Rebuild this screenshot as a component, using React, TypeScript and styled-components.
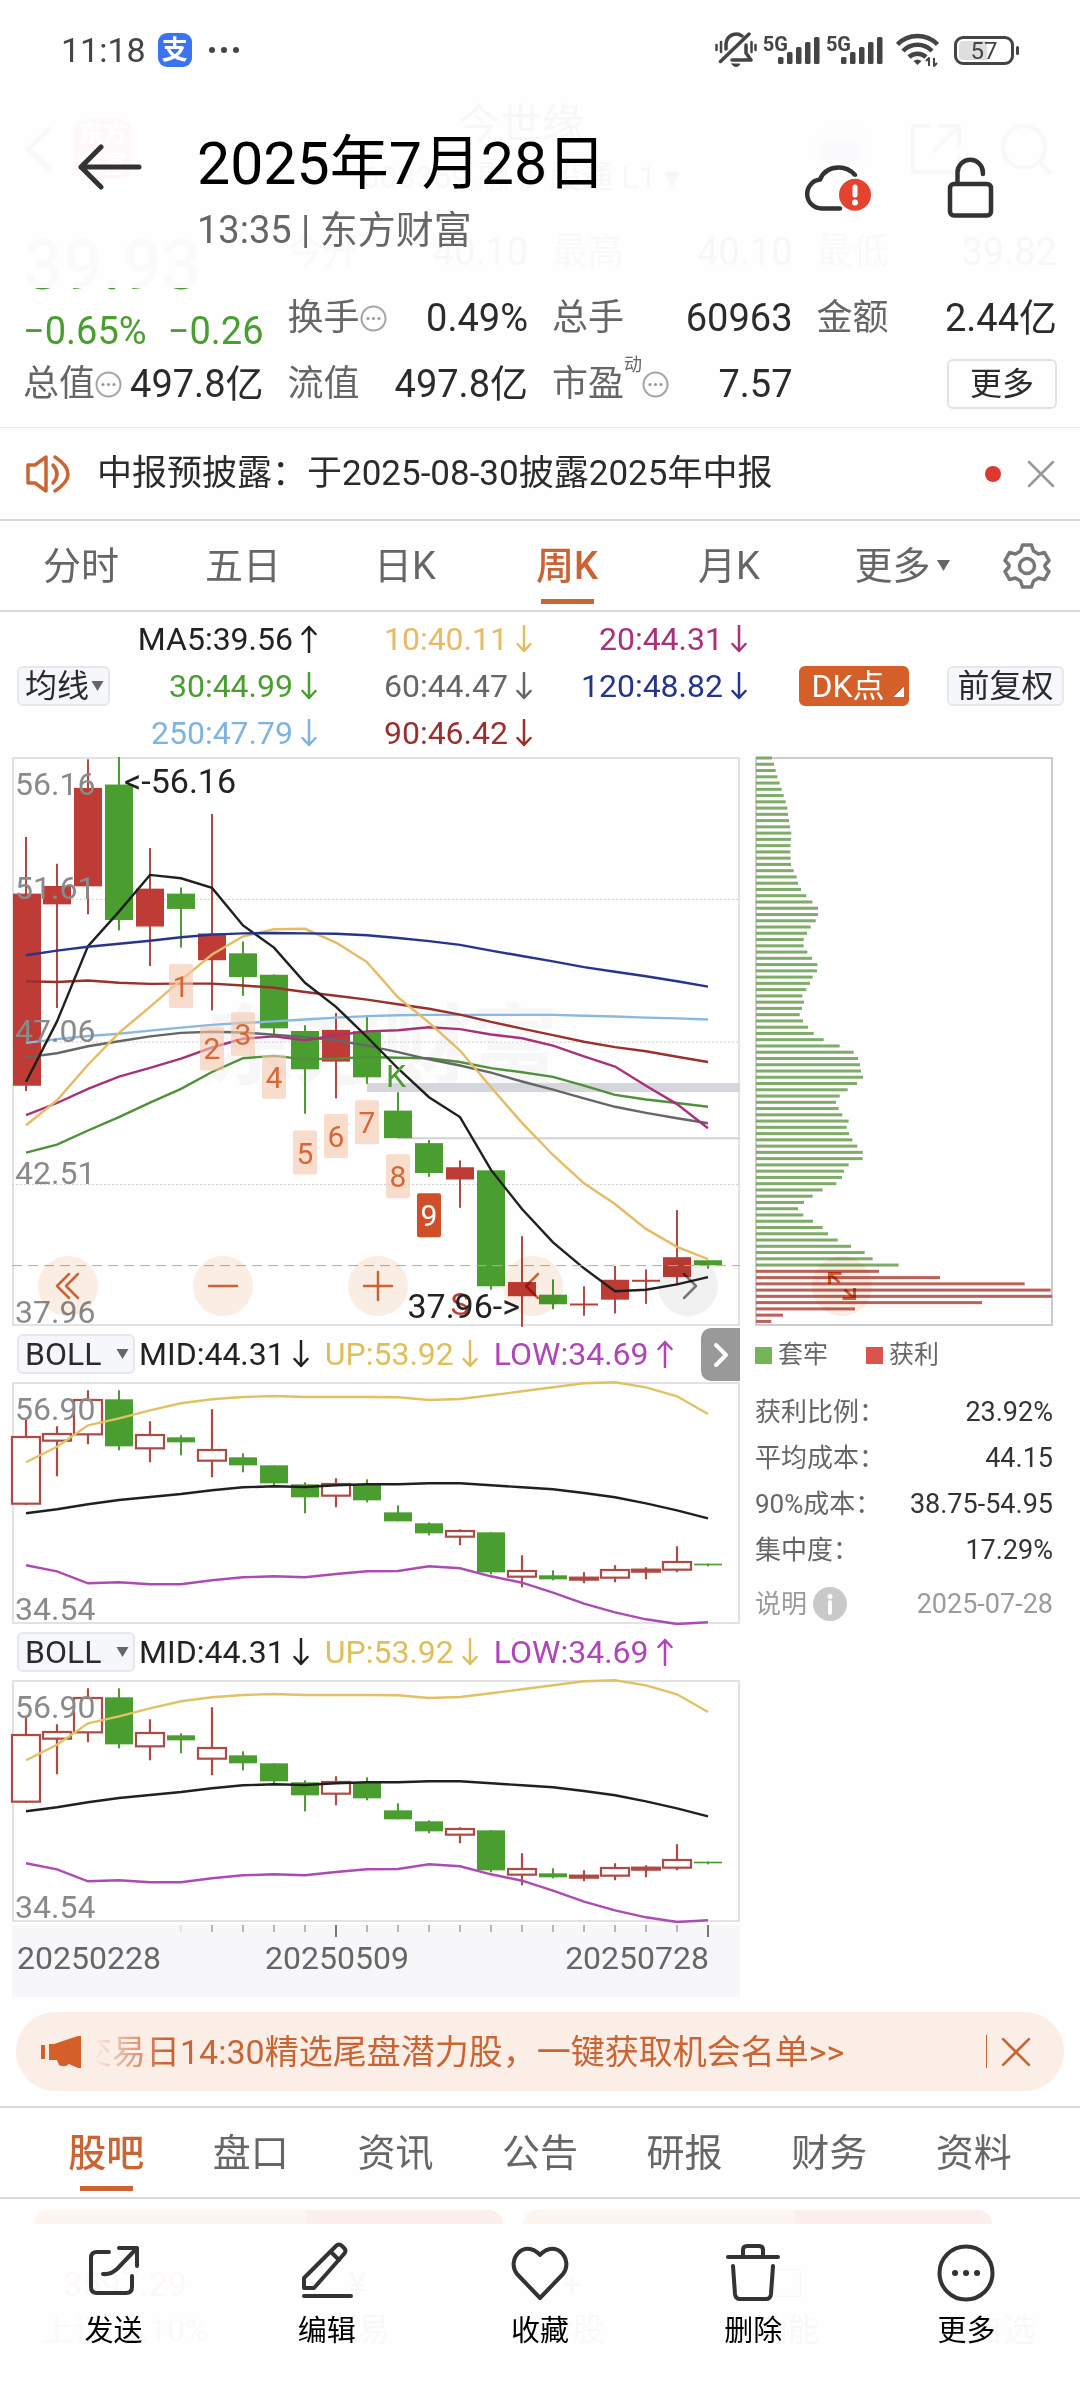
import React from 'react';
import styled, { createGlobalStyle } from 'styled-components';

const GlobalStyle = createGlobalStyle`
  * { box-sizing: border-box; }
  body {
    margin: 0;
    background: #fefefe;
    color: #2b2b2b;
    font-family: Roboto, "Noto Sans CJK SC", sans-serif;
  }
  button, select {
    margin: 0;
    padding: 0;
    border: 0;
    background: none;
    color: inherit;
    font-family: inherit;
  }
  svg { display: block; }
`;

const orange = '#cb6433';
const grey = '#666666';
const green = '#4a9e2f';
const red = '#be3c35';
const softRed = '#ad4a44';

/* ---------- page and translucent bars ---------- */

const Page = styled.div`
  position: relative;
  padding-bottom: 176px;
`;

const Header = styled.header`
  position: absolute;
  inset: 0 0 auto 0;
  height: 288px;
  background: rgba(254, 254, 254, 0.97);
  z-index: 2;
`;

const StatusBar = styled.div`
  display: flex;
  align-items: center;
  height: 100px;
  padding: 0 61px 0 61px;
  color: #444;
`;

const Clock = styled.span`
  font-size: 34px;
  line-height: 40px;
  margin-right: 12px;
`;

const AppBadge = styled.span`
  width: 34px;
  height: 34px;
  border-radius: 9px;
  background: #3a74f0;
  color: #fff;
  font-size: 26px;
  font-weight: 700;
  line-height: 34px;
  text-align: center;
  margin-right: 16px;
`;

const StatusIcons = styled.div`
  display: flex;
  align-items: center;
  margin-left: auto;
`;

const SignalGroup = styled.span`
  display: flex;
  align-items: center;
  margin-left: 6px;
`;

const SignalTag = styled.span`
  align-self: flex-start;
  font-size: 20px;
  font-weight: 700;
  line-height: 16px;
  margin-right: -10px;
`;

const WifiSlot = styled.span`
  margin: 0 15px 0 13px;
`;

const Battery = styled.span`
  display: flex;
  align-items: center;
`;

const BatteryBody = styled.span`
  width: 60px;
  height: 29px;
  border: 3px solid #444;
  border-radius: 9px;
  background: linear-gradient(90deg, #dedede 55%, #fefefe 55%);
  background-clip: content-box;
  padding: 2px;
  font-size: 24px;
  line-height: 20px;
  text-align: center;
`;

const BatteryNub = styled.span`
  width: 3px;
  height: 9px;
  margin-left: 2px;
  border-radius: 2px;
  background: #444;
`;

const ToolRow = styled.div`
  display: flex;
  align-items: flex-start;
  padding: 28px 70px 0;
`;

const ToolButton = styled.button<{ $h: number }>`
  display: flex;
  align-items: center;
  justify-content: center;
  width: 80px;
  height: ${(p) => p.$h}px;
  margin-left: 52px;
  &:first-child { margin-left: 0; }
`;

const TitleBlock = styled.div`
  flex: 1;
  padding-left: 47px;
`;

const Title = styled.h1`
  margin: 0;
  font-size: 59px;
  font-weight: 400;
  line-height: 72px;
  color: #000;
`;

const Subtitle = styled.p`
  margin: 0;
  font-size: 38px;
  line-height: 60px;
  color: #666;
`;

/* ---------- stock nav below the header ---------- */

const StockNav = styled.div`
  display: flex;
  align-items: center;
  height: 208px;
  padding: 90px 28px 0 24px;
  border-bottom: 1px solid #eee;
`;

const BrandBadge = styled.span`
  width: 58px;
  height: 60px;
  margin-left: 22px;
  border-radius: 12px;
  background: #e8643c;
  color: #fff;
  font-size: 24px;
  font-weight: 700;
  line-height: 30px;
  text-align: center;
`;

const StockName = styled.div`
  flex: 1;
  padding-left: 98px;
  text-align: center;
  font-size: 42px;
  line-height: 56px;
`;

const StockCode = styled.div`
  font-size: 32px;
  line-height: 48px;
`;

const NavIcons = styled.div`
  display: flex;
  align-items: center;
  gap: 38px;
`;

/* ---------- quote figures ---------- */

const QuoteGrid = styled.section`
  display: grid;
  grid-template-columns: repeat(4, 1fr);
  grid-auto-rows: 66px;
  column-gap: 24px;
  padding: 11px 23px 10px;
  border-bottom: 1px solid #ececec;
`;

const PriceCell = styled.div`
  grid-row: span 2;
  color: ${green};
`;

const Price = styled.div`
  font-size: 70px;
  font-weight: 500;
  line-height: 92px;
`;

const Change = styled.div`
  display: flex;
  justify-content: space-between;
  font-size: 38px;
  line-height: 40px;
`;

const Figure = styled.div`
  display: flex;
  align-items: center;
  font-size: 36px;
  line-height: 48px;
`;

const FigureLabel = styled.span`
  color: ${grey};
  white-space: nowrap;
`;

const FigureMark = styled.sup`
  align-self: flex-start;
  font-size: 18px;
  line-height: 28px;
  color: ${grey};
`;

const FigureValue = styled.span`
  margin-left: auto;
  font-size: 38px;
  white-space: nowrap;
`;

const MoreButton = styled.button`
  width: 110px;
  height: 50px;
  margin-left: auto;
  border: 2px solid #e2e2e2;
  border-radius: 6px;
  font-size: 32px;
  line-height: 44px;
`;

/* ---------- notice ---------- */

const Notice = styled.section`
  display: flex;
  align-items: center;
  height: 93px;
  padding: 0 25px;
  border-bottom: 2px solid #d8d8d8;
  font-size: 35px;
  line-height: 48px;
`;

const NoticeLink = styled.a`
  flex: 1;
  padding-left: 26px;
  color: inherit;
  text-decoration: none;
`;

const Dot = styled.span`
  width: 16px;
  height: 16px;
  margin-right: 26px;
  border-radius: 50%;
  background: #dc3a30;
`;

/* ---------- tabs ---------- */

const TabBar = styled.nav<{ $columns: string; $pad: number }>`
  display: grid;
  grid-template-columns: ${(p) => p.$columns};
  height: 91px;
  padding: 0 ${(p) => p.$pad}px;
  border-bottom: 2px solid #dadada;
`;

const Tab = styled.button<{ $active?: boolean }>`
  display: flex;
  align-items: center;
  justify-content: center;
  gap: 6px;
  font-size: 38px;
  line-height: 56px;
  color: ${(p) => (p.$active ? orange : grey)};
  font-weight: ${(p) => (p.$active ? 500 : 400)};
  background: linear-gradient(${(p) => (p.$active ? orange : 'transparent')}, ${(p) =>
    p.$active ? orange : 'transparent'}) center bottom 6px / 53px 5px no-repeat;
`;

const SettingsTab = styled(Tab)`
  padding-right: 20px;
`;

/* ---------- moving average legend ---------- */

const AverageBar = styled.section`
  display: flex;
  align-items: center;
  padding: 3px 16px 1px 17px;
`;

const SelectBox = styled.label<{ $w: number }>`
  position: relative;
  display: block;
  width: ${(p) => p.$w}px;
  flex: none;
`;

const Select = styled.select`
  appearance: none;
  width: 100%;
  height: 40px;
  padding: 0 0 0 6px;
  border: 2px solid #e6e7ea;
  border-radius: 6px;
  background: #f6f7fa;
  font-size: 32px;
  line-height: 36px;
`;

const Caret = styled.svg`
  position: absolute;
  right: 6px;
  top: 14px;
  pointer-events: none;
`;

const AverageGrid = styled.div`
  flex: 1;
  display: grid;
  grid-template-columns: 207fr 215fr 215fr;
  grid-auto-rows: 47px;
`;

const Reading = styled.span<{ $color: string }>`
  display: flex;
  align-items: center;
  justify-content: flex-end;
  gap: 8px;
  font-size: 32px;
  line-height: 40px;
  white-space: nowrap;
  color: ${(p) => p.$color};
`;

const Chip = styled.button<{ $solid?: boolean }>`
  height: 40px;
  margin-left: ${(p) => (p.$solid ? 52 : 38)}px;
  width: ${(p) => (p.$solid ? 110 : 117)}px;
  border: 2px solid ${(p) => (p.$solid ? '#d55f29' : '#e6e7ea')};
  border-radius: 6px;
  background: ${(p) =>
    p.$solid
      ? 'linear-gradient(135deg, transparent 50%, #fff 50%) right 3px bottom 7px / 10px 10px no-repeat #d55f29'
      : '#f6f7fa'};
  color: ${(p) => (p.$solid ? '#fff' : '#2b2b2b')};
  padding-right: ${(p) => (p.$solid ? 12 : 0)}px;
  font-size: 32px;
  line-height: 34px;
  white-space: nowrap;
`;

/* ---------- charts ---------- */

const ChartArea = styled.section`
  display: grid;
  grid-template-columns: 728fr 298fr;
  column-gap: 15px;
  padding: 0 27px 0 12px;
`;

const ChartFrame = styled.div`
  position: relative;
`;

const Plot = styled.svg`
  width: 100%;
  height: auto;
  overflow: visible;
`;

const PlotText = styled.text`
  font-size: 32px;
`;

const NoteText = styled.text`
  font-size: 34px;
  fill: #222;
`;

const Watermark = styled.text`
  font-size: 88px;
  font-weight: 700;
  fill: #f7f7f7;
`;

const CountText = styled.text`
  font-size: 30px;
`;

const PlotControls = styled.div`
  position: absolute;
  inset: auto 22px 10px 26px;
  display: flex;
  justify-content: space-between;
  mix-blend-mode: multiply;
`;

const RoundButton = styled.button<{ $muted?: boolean }>`
  display: flex;
  align-items: center;
  justify-content: center;
  width: 60px;
  height: 60px;
  border-radius: 50%;
  background: ${(p) => (p.$muted ? '#f2f2f2' : '#fbeee5')};
  color: ${(p) => (p.$muted ? '#777' : orange)};
`;

const ExpandButton = styled(RoundButton)`
  position: absolute;
  left: 19%;
  bottom: 10px;
  mix-blend-mode: multiply;
`;

const BollBar = styled.div`
  display: flex;
  align-items: center;
  gap: 16px;
  height: 56px;
  padding-left: 5px;
  ${SelectBox} { margin-right: -12px; }
`;

const NextButton = styled.button`
  display: flex;
  align-items: center;
  justify-content: center;
  align-self: flex-end;
  width: 39px;
  height: 53px;
  margin: 0 0 1px auto;
  border-radius: 10px 0 0 10px;
  background: #999;
  color: #fff;
`;

const ChipLegend = styled.div`
  display: flex;
  align-items: center;
  height: 58px;
  margin-bottom: 5px;
  gap: 38px;
`;

const LegendItem = styled.span<{ $color: string }>`
  display: flex;
  align-items: center;
  gap: 6px;
  font-size: 25px;
  line-height: 36px;
  color: ${grey};
  &::before {
    content: "";
    width: 17px;
    height: 17px;
    background: ${(p) => p.$color};
  }
`;

const StatList = styled.dl`
  margin: 0;
`;

const StatRow = styled.div<{ $muted?: boolean }>`
  display: flex;
  align-items: center;
  justify-content: space-between;
  height: ${(p) => (p.$muted ? 62 : 46)}px;
  font-size: 26px;
  line-height: 36px;
  color: ${(p) => (p.$muted ? '#9b9b9b' : '#333')};
  white-space: nowrap;
  dt {
    display: flex;
    align-items: center;
    gap: 6px;
    color: ${(p) => (p.$muted ? '#9b9b9b' : grey)};
  }
  dd {
    margin: 0;
    font-size: 27px;
  }
`;

/* ---------- promo ---------- */

const Promo = styled.section`
  display: flex;
  align-items: center;
  height: 79px;
  margin: 15px 16px;
  padding: 0 33px 0 25px;
  border-radius: 40px;
  background: #faeee6;
  color: ${orange};
`;

const PromoText = styled.a`
  flex: 1;
  overflow: hidden;
  margin-left: 12px;
  font-size: 34px;
  line-height: 48px;
  color: inherit;
  text-decoration: none;
  white-space: nowrap;
  text-indent: -16px;
  mask-image: linear-gradient(90deg, transparent, #000 70px);
`;

const PromoClose = styled.button`
  padding-left: 14px;
  border-left: 1px solid ${orange};
  height: 33px;
`;

const Divided = styled.div`
  border-top: 2px solid #dadada;
`;

/* ---------- feed cards and bottom bars ---------- */

const Cards = styled.div`
  display: grid;
  grid-template-columns: 469fr 469fr;
  gap: 20px;
  padding: 11px 88px 0 34px;
`;

const Card = styled.div`
  height: 14px;
  border-radius: 20px 20px 0 0;
  background: linear-gradient(90deg, #fdf5f0 58%, #fbefed 58%);
`;

const MarketStrip = styled.div`
  position: absolute;
  inset: auto 0 0 0;
  display: grid;
  grid-template-columns: 250fr 215fr 215fr 215fr 185fr;
  height: 176px;
  padding-top: 36px;
  font-size: 32px;
  line-height: 44px;
  text-align: center;
`;

const MarketCell = styled.div<{ $color?: string }>`
  color: ${(p) => p.$color ?? '#555'};
`;

const MarketValue = styled.div`
  font-size: 34px;
  line-height: 48px;
`;

const ActionBar = styled.footer`
  position: absolute;
  inset: auto 0 0 0;
  display: grid;
  grid-template-columns: repeat(5, 1fr);
  height: 176px;
  padding: 0 7px;
  background: rgba(254, 254, 254, 0.97);
`;

const Action = styled.button`
  display: flex;
  flex-direction: column;
  align-items: center;
  padding-top: 18px;
  gap: 7px;
  font-size: 29px;
  line-height: 44px;
  color: #000;
`;

/* ---------- icons ---------- */

const stroke = (width: number, color = 'currentColor') => ({
  fill: 'none',
  stroke: color,
  strokeWidth: width,
  strokeLinecap: 'round' as const,
  strokeLinejoin: 'round' as const,
});

const MuteBell = () => (
  <svg width="42" height="36" viewBox="0 0 42 36" {...stroke(3.5, '#444')}>
    <path d="M5.500 29.500L34 2" />
    <path d="M11 17V12C12 2 22 0 27 4M31 13v8l5 7H17" />
    <path d="M1.500 13v5M6 10v10M40.500 13v5M36.500 10v10" strokeWidth="2.500" />
    <path d="M17 32h8q-1 2.500-4 2.500T17 32z" fill="#444" strokeWidth="1" />
  </svg>
);

const Signal = () => (
  <SignalGroup>
    <SignalTag>5G</SignalTag>
    <svg width="42" height="28" viewBox="0 0 42 28" fill="#444">
      <rect x="0" y="21" width="5.500" height="7" rx="1.500" />
      <rect x="9" y="16" width="5.500" height="12" rx="1.500" />
      <rect x="18" y="11" width="5.500" height="17" rx="1.500" />
      <rect x="27" y="6" width="5.500" height="22" rx="1.500" />
      <rect x="36" y="1" width="5.500" height="27" rx="1.500" />
    </svg>
  </SignalGroup>
);

const Wifi = () => (
  <svg width="43" height="34" viewBox="0 0 43 34" {...stroke(4.5, '#444')} strokeLinecap="butt">
    <path d="M1.500 11.500a28 28 0 0 1 40 0" />
    <path d="M7 18a20 20 0 0 1 29 0" />
    <path d="M13 24a12.500 12.500 0 0 1 17 0" />
    <path d="M17.500 28q4-3 8 0l-4 4z" fill="#444" stroke="none" />
    <path d="M33 33v-8l-3 3M38 25v8l3-3" strokeWidth="2" />
  </svg>
);

const BackArrow = () => (
  <svg width="64" height="46" viewBox="0 0 64 46" {...stroke(5, '#333')}>
    <path d="M61 23H3M23 3L3 23l20 20" />
  </svg>
);

const CloudAlert = () => (
  <svg width="80" height="70" viewBox="0 0 80 70">
    <path d="M42 54.500H23.500A14.500 14.500 0 0 1 22 25.600C25 18 32 13.500 41 13.500C48 13.500 53 16.500 57 21" {...stroke(4.5, '#333')} />
    <circle cx="57" cy="40.700" r="18" fill="#fefefe" />
    <circle cx="57" cy="40.700" r="16" fill="#e4432f" />
    <path d="M57 33v8" {...stroke(5, '#fff')} />
    <circle cx="57" cy="48.500" r="3" fill="#fff" />
  </svg>
);

const OpenLock = () => (
  <svg width="80" height="70" viewBox="0 0 80 70" {...stroke(4.5, '#333')}>
    <rect x="20" y="30" width="41" height="31.500" rx="4" />
    <path d="M27.500 29V18.500a12.700 12.700 0 0 1 25.400 0V20" />
  </svg>
);

const InfoDots = () => (
  <svg width="27" height="27" viewBox="0 0 27 27" fill="#999">
    <circle cx="13.500" cy="13.500" r="12" fill="none" stroke="#a5a5a5" strokeWidth="2" />
    <circle cx="8" cy="13.500" r="1.600" />
    <circle cx="13.500" cy="13.500" r="1.600" />
    <circle cx="19" cy="13.500" r="1.600" />
  </svg>
);

const Speaker = () => (
  <svg width="46" height="40" viewBox="0 0 46 40" {...stroke(3.5, orange)}>
    <path d="M3 11h7L21 3v34l-11-8H3z" />
    <path d="M28 11q8 9 0 18M30 3q26 17 0 34" />
  </svg>
);

const Cross = ({ size, color, width }: { size: number; color: string; width: number }) => (
  <svg width={size} height={size} viewBox="0 0 28 28" {...stroke(width, color)}>
    <path d="M2 2l24 24M26 2L2 26" />
  </svg>
);

const Gear = () => (
  <svg width="48" height="48" viewBox="0 0 48 48" {...stroke(3.5, '#777')}>
    <path d="M19.500 3h9l2 6 5 3 6-1.500 4.500 8-4 4.500v2l4 4.500-4.500 8-6-1.500-5 3-2 6h-9l-2-6-5-3-6 1.500-4.500-8L6 25v-2l-4-4.500 4.500-8 6 1.500 5-3z" />
    <circle cx="24" cy="24" r="7.500" />
  </svg>
);

const Trend = ({ up }: { up?: boolean }) => (
  <svg width="16" height="28" viewBox="0 0 16 28" {...stroke(2.5)}>
    <path d={up ? 'M8 27V2M1.500 9L8 2l6.500 7' : 'M8 1v25M1.500 19L8 26l6.500-7'} />
  </svg>
);

const DownMark = ({ size }: { size: number }) => (
  <svg width={size} height={size} viewBox="0 0 12 12" fill="#666">
    <path d="M0 1h12L6 11z" />
  </svg>
);

const Glyph = ({ d }: { d: string }) => (
  <svg width="34" height="34" viewBox="0 0 34 34" {...stroke(2.5)}>
    <path d={d} />
  </svg>
);

const InfoBadge = () => (
  <svg width="34" height="34" viewBox="0 0 34 34">
    <circle cx="17" cy="17" r="17" fill="#c9c9c9" />
    <circle cx="17" cy="9.500" r="2.500" fill="#fff" />
    <path d="M17 15v11" {...stroke(4, '#fff')} />
  </svg>
);

const Megaphone = () => (
  <svg width="41" height="36" viewBox="0 0 41 36" fill="#d55f29">
    <rect x="0" y="11" width="4" height="14" />
    <path d="M8 10h5L37 2h3v32h-3l-9-4q-4 4-10 1l-2-5H8z" />
  </svg>
);

const actionIcons: Record<string, React.ReactNode> = {
  发送: (
    <>
      <path d="M25 10H13q-6 0-6 6v29q0 6 6 6h29q6 0 6-6V34" />
      <path d="M35 6h18v18M53 6L34 26q-7 7-15 6" />
    </>
  ),
  编辑: (
    <>
      <path d="M7 46V36L39 4q3-3 6 0l2 2q3 3 0 6L17 46zM34 10l8 8" />
      <path d="M7 54h47" />
    </>
  ),
  收藏: <path d="M30 56L7 32C-4 18 14-4 30 13C46-4 64 18 53 32z" />,
  删除: (
    <>
      <path d="M5 15h50M20 14V8q0-4 4-4h12q4 0 4 4v6" />
      <path d="M10 24l2 28q.500 5 5 5h26q4.500 0 5-5l2-28" />
    </>
  ),
  更多: (
    <>
      <circle cx="30" cy="31" r="26.500" />
      <path d="M19 31h.1M30 31h.1M41 31h.1" strokeWidth="6" />
    </>
  ),
};

/* ---------- chart data ---------- */

type Candle = [up: boolean, top: number, bottom: number, high: number, low: number];

const weekly: Candle[] = [
  [true, 401, 903, 253, 917], [true, 381, 429, 323, 700], [true, 125, 382, 50, 455],
  [false, 116, 470, 44, 497], [true, 388, 487, 282, 590], [false, 401, 441, 385, 542],
  [true, 505, 575, 193, 706], [false, 557, 619, 526, 668], [false, 613, 753, 612, 768],
  [false, 760, 860, 745, 976], [true, 757, 840, 713, 936], [false, 760, 881, 722, 898],
  [false, 968, 1040, 920, 1040], [false, 1053, 1131, 1045, 1141], [true, 1116, 1148, 1098, 1222],
  [false, 1124, 1427, 1124, 1436], [true, 1416, 1453, 1296, 1533], [false, 1449, 1474, 1409, 1487],
  [true, 1472, 1477, 1427, 1504], [true, 1410, 1462, 1374, 1498], [true, 1410, 1415, 1383, 1473],
  [true, 1351, 1403, 1228, 1424], [false, 1359, 1372, 1359, 1381],
];

const averages: { color: string; points: number[] }[] = [
  { color: '#4f9139', points: [1078, 1057, 1020, 985, 947, 911, 867, 831, 825, 834, 832, 828, 830, 831, 841, 857, 868, 880, 903, 927, 939, 948, 958] },
  { color: '#666666', points: [829, 818, 800, 787, 774, 765, 762, 764, 770, 776, 784, 798, 815, 834, 850, 869, 892, 913, 936, 958, 974, 988, 1001] },
  { color: '#a83279', points: [980, 948, 911, 879, 856, 832, 803, 780, 774, 784, 771, 761, 758, 750, 755, 769, 779, 798, 826, 853, 903, 951, 1014] },
  { color: '#88b9e0', points: [791, 781, 773, 767, 759, 751, 744, 739, 735, 730, 725, 721, 719, 718, 718, 718, 718, 718, 720, 722, 725, 727, 730] },
  { color: '#99302e', points: [630, 632, 628, 634, 637, 636, 636, 641, 647, 658, 668, 678, 690, 702, 717, 736, 754, 771, 788, 802, 813, 827, 841] },
  { color: '#e6bb63', points: [1006, 941, 848, 765, 697, 627, 560, 513, 494, 493, 529, 580, 672, 738, 811, 907, 1000, 1084, 1158, 1212, 1277, 1324, 1356] },
  { color: '#202020', points: [893, 735, 538, 448, 352, 361, 386, 484, 542, 634, 697, 775, 858, 933, 985, 1123, 1225, 1312, 1380, 1440, 1436, 1422, 1403] },
  { color: '#26358c', points: [562, 550, 540, 532, 524, 515, 508, 505, 504, 505, 506, 510, 517, 525, 535, 550, 564, 578, 593, 605, 617, 630, 644] },
];

const counts = [
  [5, 585], [6, 748], [7, 711], [8, 822], [9, 1020], [10, 977], [11, 941], [12, 1082], [13, 1184],
];

const boll: Candle[] = [
  [true, 320, 520, 265, 524], [true, 311, 331, 288, 438], [true, 209, 312, 180, 342],
  [false, 207, 348, 180, 360], [true, 314, 354, 273, 396], [false, 321, 336, 315, 375],
  [true, 359, 391, 237, 441], [false, 381, 405, 369, 426], [false, 405, 459, 405, 468],
  [false, 462, 501, 456, 549], [true, 461, 496, 444, 531], [false, 462, 510, 447, 516],
  [false, 546, 573, 525, 573], [false, 579, 609, 576, 615], [true, 602, 619, 597, 645],
  [false, 606, 726, 606, 732], [true, 722, 739, 675, 771], [false, 735, 747, 720, 750],
  [true, 742, 748, 726, 759], [true, 719, 742, 705, 756], [true, 718, 724, 711, 747],
  [true, 695, 718, 648, 726], [false, 700, 705, 700, 708],
];

const bands: { color: string; points: number[] }[] = [
  { color: '#e0c264', points: [396, 349, 285, 264, 240, 219, 207, 200, 197, 200, 200, 200, 201, 209, 206, 195, 183, 171, 159, 156, 171, 198, 251] },
  { color: '#202020', points: [549, 537, 522, 509, 500, 491, 480, 471, 468, 470, 465, 462, 462, 459, 459, 465, 471, 477, 488, 501, 519, 540, 564] },
  { color: '#ab4bb4', points: [705, 723, 759, 756, 762, 762, 750, 741, 738, 741, 731, 723, 722, 708, 714, 738, 757, 787, 820, 846, 867, 881, 876] },
];

const holdings = [
  96, 102, 107, 112, 119, 125, 131, 137, 142, 144, 147, 150, 154, 153, 151, 151, 152, 153, 161, 170,
  174, 183, 199, 217, 234, 234, 227, 212, 201, 191, 191, 202, 216, 232, 231, 218, 210, 199, 187, 192,
  186, 179, 189, 204, 221, 251, 299, 341, 354, 360, 363, 369, 351, 323, 299, 288, 296, 307, 326, 320,
  327, 337, 352, 368, 368, 326, 312, 306, 289, 248, 218, 192, 174, 190, 219, 248, 264, 293, 333, 374,
  398, 476, 417, 600, 854, 932, 936, 726, 345, 129, 94,
];
const firstProfit = 82;

const cx = (i: number) => 14 + 31 * i;
const wy = (v: number) => (v - 44) / 2.613;
const by = (v: number) => (v - 155) / 3;
const line = (points: number[], y: (v: number) => number) =>
  points.map((v, i) => `${cx(i)},${y(v).toFixed(1)}`).join(' ');

const WeeklyChart = () => (
  <ChartFrame>
    <Plot viewBox="0 0 728 569" role="img" aria-label="周K">
      <Watermark x="194" y="320">东方财富</Watermark>
      <rect x="1" y="1" width="726" height="567" fill="none" stroke="#e2e2e2" strokeWidth="2" />
      {[416, 789, 1161].map((v) => (
        <line key={v} x1="0" x2="728" y1={wy(v)} y2={wy(v)} stroke="#cfcfcf" strokeDasharray="2 2" />
      ))}
      <rect x={cx(11)} y={wy(896)} width={728 - cx(11)} height="9" fill="#d5d6dc" />
      <line x1={cx(12)} x2="728" y1={wy(1040)} y2={wy(1040)} stroke="#d2d2d2" strokeWidth="2" />
      {weekly.map(([up, top, bottom, high, low], i) => (
        <g key={i} fill={up ? red : green}>
          <rect x={cx(i) - 1} y={wy(high)} width="2" height={wy(low) - wy(high)} fill={up ? softRed : green} />
          <rect x={cx(i) - 14 + (i ? 0 : 1)} y={wy(top)} width="28" height={Math.max(2, wy(bottom) - wy(top))} />
        </g>
      ))}
      {averages.map((a) => (
        <polyline key={a.color} points={line(a.points, wy)} fill="none" stroke={a.color} strokeWidth="2.4" />
      ))}
      <line x1="0" x2="728" y1={wy(1373)} y2={wy(1373)} stroke="#c9a883" strokeWidth="1" strokeDasharray="10 6" />
      {counts.map(([i, top], n) => (
        <g key={n} fill={n === 8 ? '#fff' : '#d4683a'}>
          <rect x={cx(i) - 12} y={wy(top)} width="24" height="44" rx="2" fill={n === 8 ? '#cf4f2b' : '#f3c6ac'} fillOpacity={n === 8 ? 1 : 0.62} />
          <CountText x={cx(i)} y={wy(top) + 33} textAnchor="middle">{n + 1}</CountText>
        </g>
      ))}
      <g fill="#8a8a8a">
        <PlotText x="3" y={wy(143)}>56.16</PlotText>
        <PlotText x="3" y={wy(416)}>51.61</PlotText>
        <PlotText x="3" y={wy(788)}>47.06</PlotText>
        <PlotText x="3" y={wy(1161)}>42.51</PlotText>
        <PlotText x="3" y={wy(1523)}>37.96</PlotText>
      </g>
      <PlotText x={cx(12) - 2} y={wy(905)} textAnchor="middle" fill={green}>K</PlotText>
      <PlotText x={cx(14)} y={wy(1503)} textAnchor="middle" fill={red}>S</PlotText>
      <NoteText x="112" y={wy(137)}>&lt;-56.16</NoteText>
      <NoteText x="508" y={wy(1509)} textAnchor="end">37.96-&gt;</NoteText>
    </Plot>
    <PlotControls>
      <RoundButton aria-label="最早"><Glyph d="M18 5L6 17l12 12M27 5L15 17l12 12" /></RoundButton>
      <RoundButton aria-label="缩小"><Glyph d="M3 17h28" /></RoundButton>
      <RoundButton aria-label="放大"><Glyph d="M3 17h28M17 3v28" /></RoundButton>
      <RoundButton aria-label="向前"><Glyph d="M22 5L10 17l12 12" /></RoundButton>
      <RoundButton aria-label="向后" $muted><Glyph d="M13 5l12 12-12 12" /></RoundButton>
    </PlotControls>
  </ChartFrame>
);

const HoldingChart = () => (
  <ChartFrame>
    <Plot viewBox="0 0 298 569" role="img" aria-label="筹码分布">
      <rect x="1" y="1" width="296" height="567" fill="none" stroke="#cccccc" strokeWidth="2" />
      {holdings.map((end, i) => (
        <rect key={i} x="1" y={i * 6.26 - 0.5} width={(end - 48) / 3} height="3" fill={i < firstProfit ? '#7fac69' : '#bd6059'} />
      ))}
    </Plot>
    <ExpandButton aria-label="展开">
      <svg width="30" height="30" viewBox="0 0 30 30" {...stroke(3, '#d5622f')} strokeLinecap="butt" strokeLinejoin="miter">
        <path d="M2.500 13V2.500h12M2.500 2.500l10 9M27.500 17v10.500h-12M27.500 27.500l-10-9" />
      </svg>
    </ExpandButton>
  </ChartFrame>
);

const BollPanel = ({ id, next }: { id: string; next?: boolean }) => (
  <>
    <BollBar>
      <SelectBox $w={118} htmlFor={id}>
        <Select id={id} aria-label="指标"><option>BOLL</option></Select>
        <Caret width="13" height="12" viewBox="0 0 12 12" fill="#666"><path d="M0 1h12L6 11z" /></Caret>
      </SelectBox>
      <Reading $color="#222">MID:44.31<Trend /></Reading>
      <Reading $color="#dfbe5c">UP:53.92<Trend /></Reading>
      <Reading $color="#b044bb">LOW:34.69<Trend up /></Reading>
      {next && (
        <NextButton aria-label="下一个指标">
          <svg width="16" height="26" viewBox="0 0 16 26" {...stroke(4)}><path d="M3 3l10 10L3 23" /></svg>
        </NextButton>
      )}
    </BollBar>
    <Plot viewBox="0 0 728 242" role="img" aria-label="BOLL">
      <rect x="1" y="1" width="726" height="240" fill="none" stroke="#e2e2e2" strokeWidth="2" />
      {boll.map(([up, top, bottom, high, low], i) =>
        up ? (
          <g key={i} stroke={softRed} strokeWidth="2.2">
            <path d={`M${cx(i)} ${by(high)}V${by(top)}M${cx(i)} ${by(bottom)}V${by(low)}`} />
            <rect x={cx(i) - 14} y={by(top)} width="28" height={by(bottom) - by(top)} fill="#fff" />
          </g>
        ) : (
          <g key={i} fill={green}>
            <rect x={cx(i) - 1} y={by(high)} width="2" height={by(low) - by(high)} />
            <rect x={cx(i) - 14} y={by(top)} width="28" height={by(bottom) - by(top)} />
          </g>
        ),
      )}
      {bands.map((b) => (
        <polyline key={b.color} points={line(b.points, by)} fill="none" stroke={b.color} strokeWidth="2.4" />
      ))}
      <PlotText x="3" y={by(268)} fill="#8a8a8a">56.90</PlotText>
      <PlotText x="3" y={by(868)} fill="#8a8a8a">34.54</PlotText>
    </Plot>
  </>
);

const DateAxis = () => (
  <Plot viewBox="0 0 728 75" role="img" aria-label="日期">
    <rect x="0" y="3" width="728" height="72" fill="#f7f7fa" />
    {weekly.map((_, i) => {
      if (i < 5) return null;
      const major = i === 10 || i === 22;
      return <line key={i} x1={cx(i)} x2={cx(i)} y1="3" y2={major ? 15 : 10} stroke={i === 5 ? '#d0d0d0' : '#777'} strokeWidth={major ? 2 : 1} />;
    })}
    <g fill="#666">
      <PlotText x="5" y="47">20250228</PlotText>
      <PlotText x="325" y="47" textAnchor="middle">20250509</PlotText>
      <PlotText x="697" y="47" textAnchor="end">20250728</PlotText>
    </g>
  </Plot>
);

const QuoteFigure = ({ label, value, info, mark }: { label: string; value: string; info?: boolean; mark?: string }) => (
  <Figure>
    <FigureLabel>{label}</FigureLabel>
    {mark && <FigureMark>{mark}</FigureMark>}
    {info && <InfoDots />}
    <FigureValue>{value}</FigureValue>
  </Figure>
);

export default function App() {
  return (
    <Page>
      <GlobalStyle />

      <Header>
        <StatusBar>
          <Clock>11:18</Clock>
          <AppBadge>支</AppBadge>
          <svg width="32" height="8" viewBox="0 0 32 8" fill="#444">
            <circle cx="4" cy="4" r="3" /><circle cx="16" cy="4" r="3" /><circle cx="28" cy="4" r="3" />
          </svg>
          <StatusIcons>
            <MuteBell />
            <Signal />
            <Signal />
            <WifiSlot><Wifi /></WifiSlot>
            <Battery><BatteryBody>57</BatteryBody><BatteryNub /></Battery>
          </StatusIcons>
        </StatusBar>
        <ToolRow>
          <ToolButton $h={78} aria-label="返回"><BackArrow /></ToolButton>
          <TitleBlock>
            <Title>2025年7月28日</Title>
            <Subtitle>13:35 | 东方财富</Subtitle>
          </TitleBlock>
          <ToolButton $h={122} aria-label="云同步"><CloudAlert /></ToolButton>
          <ToolButton $h={122} aria-label="解锁"><OpenLock /></ToolButton>
        </ToolRow>
      </Header>

      <StockNav>
        <svg width="28" height="46" viewBox="0 0 28 46" {...stroke(5, '#555')}><path d="M25 3L4 23l21 20" /></svg>
        <BrandBadge>东方<br />财富</BrandBadge>
        <StockName>
          今世缘
          <StockCode>603369 融 沪股通 L1 ▾</StockCode>
        </StockName>
        <NavIcons>
          <svg width="60" height="60" viewBox="0 0 60 60">
            <circle cx="30" cy="30" r="29" fill="#f5e0cc" /><rect x="9" y="22" width="42" height="22" rx="10" fill="#9aa3d6" />
          </svg>
          <svg width="52" height="52" viewBox="0 0 52 52" {...stroke(4, '#555')}><path d="M18 3H3v46h46V34M30 3h19v19M49 3L24 28" /></svg>
          <svg width="52" height="52" viewBox="0 0 52 52" {...stroke(4, '#555')}><circle cx="24" cy="24" r="21" /><path d="M39 39l11 11" /></svg>
        </NavIcons>
      </StockNav>

      <QuoteGrid>
        <PriceCell>
          <Price>39.93</Price>
          <Change><span>−0.65%</span><span>−0.26</span></Change>
        </PriceCell>
        <QuoteFigure label="今开" value="40.10" />
        <QuoteFigure label="最高" value="40.10" />
        <QuoteFigure label="最低" value="39.82" />
        <QuoteFigure label="换手" value="0.49%" info />
        <QuoteFigure label="总手" value="60963" />
        <QuoteFigure label="金额" value="2.44亿" />
        <QuoteFigure label="总值" value="497.8亿" info />
        <QuoteFigure label="流值" value="497.8亿" />
        <QuoteFigure label="市盈" value="7.57" mark="动" info />
        <Figure><MoreButton>更多</MoreButton></Figure>
      </QuoteGrid>

      <Notice>
        <Speaker />
        <NoticeLink href="#notice">中报预披露：于2025-08-30披露2025年中报</NoticeLink>
        <Dot />
        <button aria-label="关闭公告"><Cross size={28} color="#999" width={2.5} /></button>
      </Notice>

      <TabBar $columns="repeat(5, 81fr) 92fr 43fr" $pad={0}>
        <Tab>分时</Tab>
        <Tab>五日</Tab>
        <Tab>日K</Tab>
        <Tab $active>周K</Tab>
        <Tab>月K</Tab>
        <Tab>更多<DownMark size={13} /></Tab>
        <SettingsTab aria-label="设置"><Gear /></SettingsTab>
      </TabBar>

      <AverageBar>
        <SelectBox $w={93} htmlFor="average">
          <Select id="average" aria-label="均线"><option>均线</option></Select>
          <Caret width="13" height="12" viewBox="0 0 12 12" fill="#666"><path d="M0 1h12L6 11z" /></Caret>
        </SelectBox>
        <AverageGrid>
          <Reading $color="#222">MA5:39.56<Trend up /></Reading>
          <Reading $color="#e6bb63">10:40.11<Trend /></Reading>
          <Reading $color="#a83279">20:44.31<Trend /></Reading>
          <Reading $color={green}>30:44.99<Trend /></Reading>
          <Reading $color="#666">60:44.47<Trend /></Reading>
          <Reading $color="#26358c">120:48.82<Trend /></Reading>
          <Reading $color="#7fb4de">250:47.79<Trend /></Reading>
          <Reading $color="#99302e">90:46.42<Trend /></Reading>
        </AverageGrid>
        <Chip $solid>DK点</Chip>
        <Chip>前复权</Chip>
      </AverageBar>

      <ChartArea>
        <div>
          <WeeklyChart />
          <BollPanel id="boll-first" next />
          <BollPanel id="boll-second" />
          <DateAxis />
        </div>
        <div>
          <HoldingChart />
          <ChipLegend>
            <LegendItem $color="#74b657">套牢</LegendItem>
            <LegendItem $color="#d9534f">获利</LegendItem>
          </ChipLegend>
          <StatList>
            <StatRow><dt>获利比例：</dt><dd>23.92%</dd></StatRow>
            <StatRow><dt>平均成本：</dt><dd>44.15</dd></StatRow>
            <StatRow><dt>90%成本：</dt><dd>38.75-54.95</dd></StatRow>
            <StatRow><dt>集中度：</dt><dd>17.29%</dd></StatRow>
            <StatRow $muted><dt>说明<InfoBadge /></dt><dd>2025-07-28</dd></StatRow>
          </StatList>
        </div>
      </ChartArea>

      <Promo>
        <Megaphone />
        <PromoText href="#picks">交易日14:30精选尾盘潜力股，一键获取机会名单&gt;&gt;</PromoText>
        <PromoClose aria-label="关闭推广"><Cross size={30} color={orange} width={2.5} /></PromoClose>
      </Promo>

      <Divided>
        <TabBar $columns="repeat(7, 1fr)" $pad={34}>
          <Tab $active>股吧</Tab>
          <Tab>盘口</Tab>
          <Tab>资讯</Tab>
          <Tab>公告</Tab>
          <Tab>研报</Tab>
          <Tab>财务</Tab>
          <Tab>资料</Tab>
        </TabBar>
      </Divided>

      <Cards><Card /><Card /></Cards>

      <MarketStrip>
        <MarketCell $color="#d9403a"><MarketValue>3597.29</MarketValue>上证 -0.10%</MarketCell>
        <MarketCell><MarketValue>¥</MarketValue>交易</MarketCell>
        <MarketCell><MarketValue>+</MarketValue>诊股</MarketCell>
        <MarketCell><MarketValue>□</MarketValue>功能</MarketCell>
        <MarketCell><MarketValue>−</MarketValue>设自选</MarketCell>
      </MarketStrip>

      <ActionBar>
        {Object.entries(actionIcons).map(([name, art]) => (
          <Action key={name}>
            <svg width="60" height="60" viewBox="0 0 60 60" {...stroke(4, '#333')}>{art}</svg>
            {name}
          </Action>
        ))}
      </ActionBar>
    </Page>
  );
}
